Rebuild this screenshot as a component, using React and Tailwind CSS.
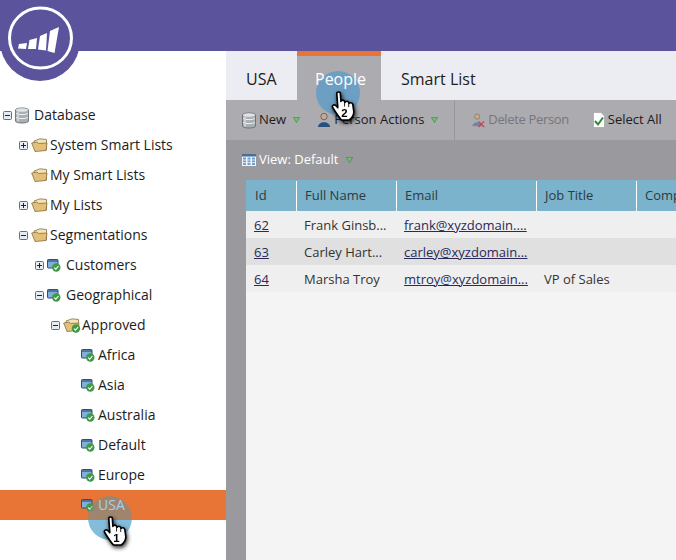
import React from "react";

const indent = ["pl-[3px]", "pl-[19px]", "pl-[35px]", "pl-[51px]", "pl-[67px]"];

const treeRows = [
  { label: "Database", level: 0, box: "minus", icon: "db" },
  { label: "System Smart Lists", level: 1, box: "plus", icon: "folder" },
  { label: "My Smart Lists", level: 1, icon: "folder" },
  { label: "My Lists", level: 1, box: "plus", icon: "folder" },
  { label: "Segmentations", level: 1, box: "minus", icon: "folder" },
  { label: "Customers", level: 2, box: "plus", icon: "list" },
  { label: "Geographical", level: 2, box: "minus", icon: "list" },
  { label: "Approved", level: 3, box: "minus", icon: "folderCheck" },
  { label: "Africa", level: 4, icon: "list" },
  { label: "Asia", level: 4, icon: "list" },
  { label: "Australia", level: 4, icon: "list" },
  { label: "Default", level: 4, icon: "list" },
  { label: "Europe", level: 4, icon: "list" },
  { label: "USA", level: 4, icon: "list", active: true },
];

const people = [
  { id: "62", name: "Frank Ginsb...", email: "frank@xyzdomain....", job: "" },
  { id: "63", name: "Carley Hart...", email: "carley@xyzdomain...", job: "" },
  { id: "64", name: "Marsha Troy", email: "mtroy@xyzdomain...", job: "VP of Sales" },
];

function Logo() {
  return (
    <div className="absolute left-0 top-0 w-[80px] h-[81px] rounded-full bg-[#5b549d]">
      <svg width="80" height="81" viewBox="0 0 80 81">
        <ellipse cx="40.5" cy="38" rx="31" ry="30" fill="none" stroke="#fff" strokeWidth="3" />
        <path d="M19 44 L27 43 L26 49 L18 48.5 Z" fill="#fff" />
        <path d="M29.5 40 L37 38 L36 49 L28 49 Z" fill="#fff" />
        <path d="M40 36 L47 33 L46 50.5 L38 49.5 Z" fill="#fff" />
        <path d="M50 31 L59 27 L54.5 53 L47.5 51 Z" fill="#fff" />
      </svg>
    </div>
  );
}

function TreeBox({ type }) {
  return (
    <svg width="9" height="9" viewBox="0 0 9 9">
      <rect x="0.5" y="0.5" width="8" height="8" rx="1" fill="#e6ecf2" stroke="#5f6f80" />
      <path d="M2 4.5 H7" stroke="#222" />
      {type === "plus" && <path d="M4.5 2 V7" stroke="#222" />}
    </svg>
  );
}

function DbIcon() {
  return (
    <svg width="14" height="17" viewBox="0 0 14 17">
      <path d="M0.5 3 C0.5 0.3 13.5 0.3 13.5 3 V14 C13.5 16.7 0.5 16.7 0.5 14 Z" fill="#a9b0b5" stroke="#5f6468" strokeWidth="0.8" />
      <ellipse cx="7" cy="3" rx="6" ry="1.7" fill="#dfe3e6" />
      <path d="M1 6.5 C4 8 10 8 13 6.5 M1 10.5 C4 12 10 12 13 10.5" stroke="#eef0f2" fill="none" />
      <path d="M3 4.5 V14.5" stroke="#d7dbde" strokeWidth="1.5" />
    </svg>
  );
}

function Check({ x, y }) {
  return (
    <g transform={`translate(${x} ${y})`}>
      <circle cx="4.5" cy="4.5" r="4.2" fill="#3f9a45" />
      <path d="M2.4 4.6 L4 6.2 L6.7 3" stroke="#fff" strokeWidth="1.1" fill="none" />
    </g>
  );
}

function FolderIcon({ check }) {
  return (
    <svg width="18" height="15" viewBox="0 0 18 15">
      <path d="M3 3 L9 0.8 L15.5 1.5 V12 H5 Z" fill="#f4e2b8" stroke="#85703f" strokeWidth="0.8" />
      <path d="M0.7 5 L6 4 L7.5 5.5 L16 5 L15 12.5 L4 13.5 Z" fill="#e3bf7a" stroke="#85703f" strokeWidth="0.8" />
      {check && <Check x="8.5" y="6" />}
    </svg>
  );
}

function ListIcon() {
  return (
    <svg width="14" height="14" viewBox="0 0 14 14">
      <rect x="0.5" y="1.5" width="10.5" height="8.5" rx="0.8" fill="#7fb0dc" stroke="#2c4f78" />
      <path d="M1 3 H11" stroke="#2c4f78" strokeWidth="1.2" />
      <Check x="4.8" y="5" />
    </svg>
  );
}

const treeIcons = {
  db: <DbIcon />,
  folder: <FolderIcon />,
  folderCheck: <FolderIcon check />,
  list: <ListIcon />,
};

function Caret() {
  return (
    <svg width="7" height="6" viewBox="0 0 7 6">
      <path d="M0.4 0.4 H6.6 L3.5 5.6 Z" fill="#6cc46c" stroke="#3c7d3e" strokeWidth="0.6" />
    </svg>
  );
}

function PersonIcon() {
  return (
    <svg width="14" height="16" viewBox="0 0 14 16">
      <circle cx="7" cy="4.5" r="3.2" fill="#c9a98c" stroke="#3d4f66" strokeWidth="0.7" />
      <path d="M1 15 C1 8.5 13 8.5 13 15 Z" fill="#27517f" />
    </svg>
  );
}

function PersonXIcon() {
  return (
    <svg width="13" height="15" viewBox="0 0 15 17">
      <circle cx="6" cy="4" r="3" fill="#c9a98c" stroke="#7a6a5c" strokeWidth="0.7" />
      <path d="M0.5 15 C0.5 9 11 9 11 15 Z" fill="#6d86a8" />
      <path d="M7.5 9.5 L14 16 M14 9.5 L7.5 16" stroke="#c8464f" strokeWidth="1.6" />
    </svg>
  );
}

function SelectAllIcon() {
  return (
    <svg width="12" height="16" viewBox="0 0 12 16">
      <path d="M0.5 0.5 H8 L11.5 4 V15.5 H0.5 Z" fill="#fff" stroke="#999" strokeWidth="0.6" />
      <path d="M2 9 L5 12.5 L10 5.5" stroke="#2f8a33" strokeWidth="2" fill="none" />
    </svg>
  );
}

function GridIcon() {
  return (
    <svg width="14" height="12" viewBox="0 0 14 12">
      <rect width="14" height="12" fill="#f2f5f8" />
      <rect y="0" width="14" height="2.5" fill="#4b6d94" />
      <path d="M1 3.5 H4 V11 H1 Z M5.5 3.5 H8.5 V11 H5.5 Z M10 3.5 H13 V11 H10 Z" fill="#6d9fd0" />
      <path d="M0 6 H14 M0 8.6 H14" stroke="#f2f5f8" strokeWidth="0.8" />
    </svg>
  );
}

// blue click marker with the hand cursor on top
function ClickHint({ n, className, discClass }) {
  return (
    <div className={`absolute w-[44px] h-[44px] ${className}`}>
      <div className={`absolute inset-0 rounded-full ${discClass}`} />
      <svg className="absolute z-20 left-[15px] top-[20px] drop-shadow-[1px_2px_2px_rgba(0,0,0,0.85)]" width="25" height="30" viewBox="0 0 24 29">
        <path
          d="M5.5 2.5 C5.5 0.5 9 0.5 9 2.5 L9.5 10 C10 8.5 12.5 8.5 13 10 L13.5 11 C14 9.5 16.5 9.5 17 11 L17.5 12 C18 11 20.5 11 21 13 L22 20 C22 24 19.5 26.5 17.5 28 L10 28 C8 26 4 20 1.5 16 C0.5 14 3 12.5 4.5 14 L6.5 16 Z"
          fill="#fff"
          stroke="#000"
          strokeWidth="1.6"
          strokeLinejoin="round"
        />
        <path d="M13 10.5 V15 M17 11.5 V15.5" stroke="#000" strokeWidth="0.8" />
        <text x="13" y="25" textAnchor="middle" fontSize="11" fontWeight="700" fill="#000" fontFamily="Liberation Sans, sans-serif">
          {n}
        </text>
      </svg>
    </div>
  );
}

function Tree() {
  return (
    <aside className="relative w-[226px] pt-[49px] bg-white">
      {treeRows.map((row) => (
        <div
          key={row.label}
          className={`flex items-center h-[30px] text-[14px] ${indent[row.level]} ${row.active ? "bg-[#e87435] text-[#a9cfe6]" : "text-[#1c1c1c]"}`}
        >
          <span className="w-[12px] flex items-center">{row.box && <TreeBox type={row.box} />}</span>
          <span className={`w-[19px] flex items-center ${row.level === 4 ? "pl-[2px]" : ""}`}>{treeIcons[row.icon]}</span>
          <span className={`pb-[2px] ${row.active ? "relative z-10" : ""}`}>{row.label}</span>
        </div>
      ))}
      <ClickHint
        n="1"
        className="left-[88px] top-[445px]"
        discClass="bg-[linear-gradient(rgba(129,140,134,0.7)_24px,rgba(80,160,205,0.7)_24px)]"
      />
    </aside>
  );
}

function ToolButton({ icon, label, caret, muted, className }) {
  return (
    <div className={`flex items-center whitespace-nowrap text-[13px] ${muted ? "text-[#77767b] tracking-[-0.35px]" : "text-[#1c1c1c]"} ${className}`}>
      {icon}
      <span className="ml-[3px]">{label}</span>
      {caret && <span className="ml-[7px] flex"><Caret /></span>}
    </div>
  );
}

function PeopleTable() {
  const cols = ["w-[51px] pl-[9px]", "w-[100px] pl-[8px]", "w-[140px] pl-[8px]", "w-[100px] pl-[8px]"];
  return (
    <div className="flex-1 ml-[20px] bg-[#f4f4f4] text-[13px] text-[#333]">
      <div className="flex h-[31px] bg-[#7ab3cb] text-[#2f3a40] pt-px">
        {["Id", "Full Name", "Email", "Job Title"].map((h, i) => (
          <div key={h} className={`${cols[i]} shrink-0 flex items-center border-r border-white`}>{h}</div>
        ))}
        <div className="flex items-center pl-[8px] whitespace-nowrap">Comp</div>
      </div>
      {people.map((p, i) => (
        <div key={p.id} className={`flex items-center h-[27px] pt-[2px] ${i === 1 ? "bg-[#e0e0e0]" : "bg-[#efefef]"}`}>
          <div className="w-[51px] pl-[8px] underline text-[#2a2a5a]">{p.id}</div>
          <div className="w-[100px] pl-[7px] whitespace-nowrap">{p.name}</div>
          <div className="w-[140px] pl-[7px] underline text-[#2a2a5a] whitespace-nowrap">{p.email}</div>
          <div className="pl-[7px] whitespace-nowrap">{p.job}</div>
        </div>
      ))}
    </div>
  );
}

export default function App() {
  return (
    <div className="relative w-[676px] h-[560px] overflow-hidden bg-white font-['Open_Sans',sans-serif]">
      <header className="h-[51px] bg-[#5b549d]" />
      <div className="flex h-[509px]">
        <Tree />
        <main className="relative flex-1 flex flex-col bg-[#9a999e] overflow-hidden">
          {/* Tabs */}
          <div className="flex h-[49px] shrink-0 bg-[#ecedf2] text-[16px] text-[#1c1c1c]">
            <div className="w-[71px] pl-[20px] pt-[16px]">USA</div>
            <div className="w-[84px] pl-[18px] pt-[11px] border-t-[5px] border-[#e87435] bg-[#acabb0] text-white">
              <span className="relative z-10">People</span>
            </div>
            <div className="pl-[20px] pt-[16px]">Smart List</div>
          </div>

          {/* Toolbar */}
          <div className="flex items-center h-[40px] shrink-0 pl-[16px] bg-[#acabb0]">
            <ToolButton icon={<DbIcon />} label="New" caret />
            <ToolButton icon={<PersonIcon />} label="Person Actions" caret className="ml-[17px]" />
            <div className="w-px h-[40px] bg-[#98979c] ml-[16px]" />
            <ToolButton icon={<PersonXIcon />} label="Delete Person" muted className="ml-[17px]" />
            <ToolButton icon={<SelectAllIcon />} label="Select All" className="ml-[24px]" />
          </div>

          {/* View selector */}
          <div className="flex items-center h-[40px] shrink-0 pl-[16px] text-[13px] text-white">
            <GridIcon />
            <span className="ml-[3px]">View: Default</span>
            <span className="ml-[8px] flex"><Caret /></span>
          </div>

          <div className="flex flex-1 overflow-hidden">
            <PeopleTable />
          </div>

          <ClickHint n="2" className="left-[90px] top-[20px]" discClass="bg-[rgba(83,154,204,0.7)]" />
        </main>
      </div>
      <Logo />
    </div>
  );
}
